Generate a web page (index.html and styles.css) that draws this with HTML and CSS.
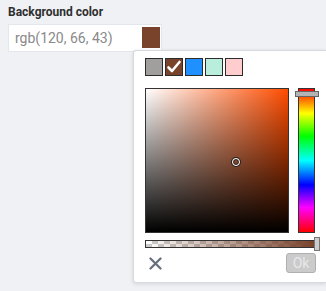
FILE: index.html
```html
<!DOCTYPE html>
<html>
<head>
<meta charset="utf-8">
<link rel="stylesheet" href="styles.css">
</head>
<body>
<div class="field">
  <div class="label">Background color</div>
  <div class="input-row">
    <div class="input">rgb(120, 66, 43)</div>
    <div class="swatch-btn"><span class="swatch-fill"></span></div>
  </div>
</div>
<div class="popup">
  <div class="presets">
    <span class="preset p-gray"></span>
    <span class="preset p-brown">
      <svg width="16" height="16" viewBox="0 0 16 16"><path d="M2.5 8.5 L6 12 L13.5 3" fill="none" stroke="#fff" stroke-width="2.6" stroke-linecap="round" stroke-linejoin="round"/></svg>
    </span>
    <span class="preset p-blue"></span>
    <span class="preset p-mint"></span>
    <span class="preset p-pink"></span>
  </div>
  <div class="picker">
    <div class="sv">
      <span class="sv-cursor"></span>
    </div>
    <div class="hue">
      <span class="hue-handle"></span>
    </div>
  </div>
  <div class="alpha">
    <span class="alpha-handle"></span>
  </div>
  <div class="footer">
    <svg class="clear" width="13" height="13" viewBox="0 0 13 13"><path d="M1.5 1.5 L11.5 11.5 M11.5 1.5 L1.5 11.5" stroke="#66707f" stroke-width="2.3" stroke-linecap="round"/></svg>
    <button class="ok">Ok</button>
  </div>
</div>
</body>
</html>
```

FILE: styles.css
```css
html, body {
  margin: 0;
  padding: 0;
}
body {
  width: 326px;
  height: 291px;
  overflow: hidden;
  background: #eff1f5;
  font-family: Roboto, "Liberation Sans", sans-serif;
  position: relative;
}
.field {
  padding: 5px 0 0 8px;
}
.label {
  font-size: 12px;
  font-weight: bold;
  color: #2e2e2e;
  line-height: 15px;
  height: 19px;
}
.input-row {
  display: flex;
  height: 28px;
}
.input {
  box-sizing: border-box;
  width: 133px;
  height: 28px;
  background: #fff;
  border: 1px solid #e3e6ea;
  border-right: none;
  color: #8a8a8a;
  font-size: 14px;
  line-height: 26px;
  padding-left: 6px;
}
.swatch-btn {
  box-sizing: border-box;
  width: 21px;
  height: 28px;
  background: #fff;
  border: 1px solid #e3e6ea;
  border-left: none;
  padding: 2px 1px 3px 1px;
  display: flex;
}
.swatch-fill {
  flex: 1;
  background: rgb(120, 66, 43);
}
.popup {
  position: absolute;
  left: 133px;
  top: 50px;
  width: 193px;
  height: 233px;
  box-sizing: border-box;
  background: #fff;
  border: 1px solid #d6d9de;
  border-right: none;
  border-radius: 3px 0 0 3px;
  box-shadow: 0 1px 4px rgba(0, 0, 0, 0.12);
  padding: 7px 11px;
}
.presets {
  display: flex;
  gap: 2px;
}
.preset {
  box-sizing: border-box;
  width: 18px;
  height: 18px;
  border: 1px solid #2b2b2b;
  display: flex;
  align-items: center;
  justify-content: center;
}
.p-gray { background: #a19e9e; }
.p-brown { background: rgb(120, 66, 43); }
.p-blue { background: #1e90ff; }
.p-mint { background: #b9eedc; }
.p-pink { background: #ffcdcd; }
.picker {
  display: flex;
  gap: 9px;
  margin-top: 12px;
}
.sv {
  position: relative;
  box-sizing: border-box;
  width: 146px;
  height: 145px;
  border: 1px solid #333;
  background:
    linear-gradient(to top, #000, rgba(0, 0, 0, 0)),
    linear-gradient(to right, #fff, hsl(18, 100%, 50%));
}
.sv-cursor {
  position: absolute;
  left: 86px;
  top: 69px;
  width: 8px;
  height: 8px;
  box-sizing: border-box;
  border-radius: 50%;
  border: 1.5px solid #fff;
  box-shadow: 0 0 0 1px #222, inset 0 0 0 1px #222;
}
.hue {
  position: relative;
  box-sizing: border-box;
  width: 17px;
  height: 145px;
  border: 1px solid #333;
  background: linear-gradient(to bottom, #f00, #ff0 17%, #0f0 33%, #0ff 50%, #00f 67%, #f0f 83%, #f00);
}
.hue-handle {
  position: absolute;
  left: -4px;
  top: 2px;
  width: 24px;
  height: 6px;
  box-sizing: border-box;
  background: #b4b4b4;
  border: 1px solid #666;
}
.alpha {
  position: relative;
  box-sizing: border-box;
  width: 171px;
  height: 8px;
  margin-top: 7px;
  border: 1px solid #333;
  background:
    linear-gradient(to right, rgba(120, 66, 43, 0), rgb(120, 66, 43)),
    repeating-conic-gradient(#ccc 0 25%, #fff 0 50%) 0 0 / 12px 6px;
}
.alpha-handle {
  position: absolute;
  right: -5px;
  top: -4px;
  width: 6px;
  height: 14px;
  box-sizing: border-box;
  background: #ccc;
  border: 1px solid #777;
}
.footer {
  width: 171px;
  display: flex;
  justify-content: space-between;
  align-items: flex-start;
  margin-top: 5px;
}
.clear {
  margin: 4px 0 0 4px;
}
.ok {
  box-sizing: border-box;
  width: 30px;
  height: 20px;
  padding: 0;
  background: #cbcbcb;
  border: 1px solid #b0b0b0;
  border-radius: 3px;
  color: #e8e8e8;
  font-family: Roboto, "Liberation Sans", sans-serif;
  font-size: 14px;
  line-height: 18px;
}
```
